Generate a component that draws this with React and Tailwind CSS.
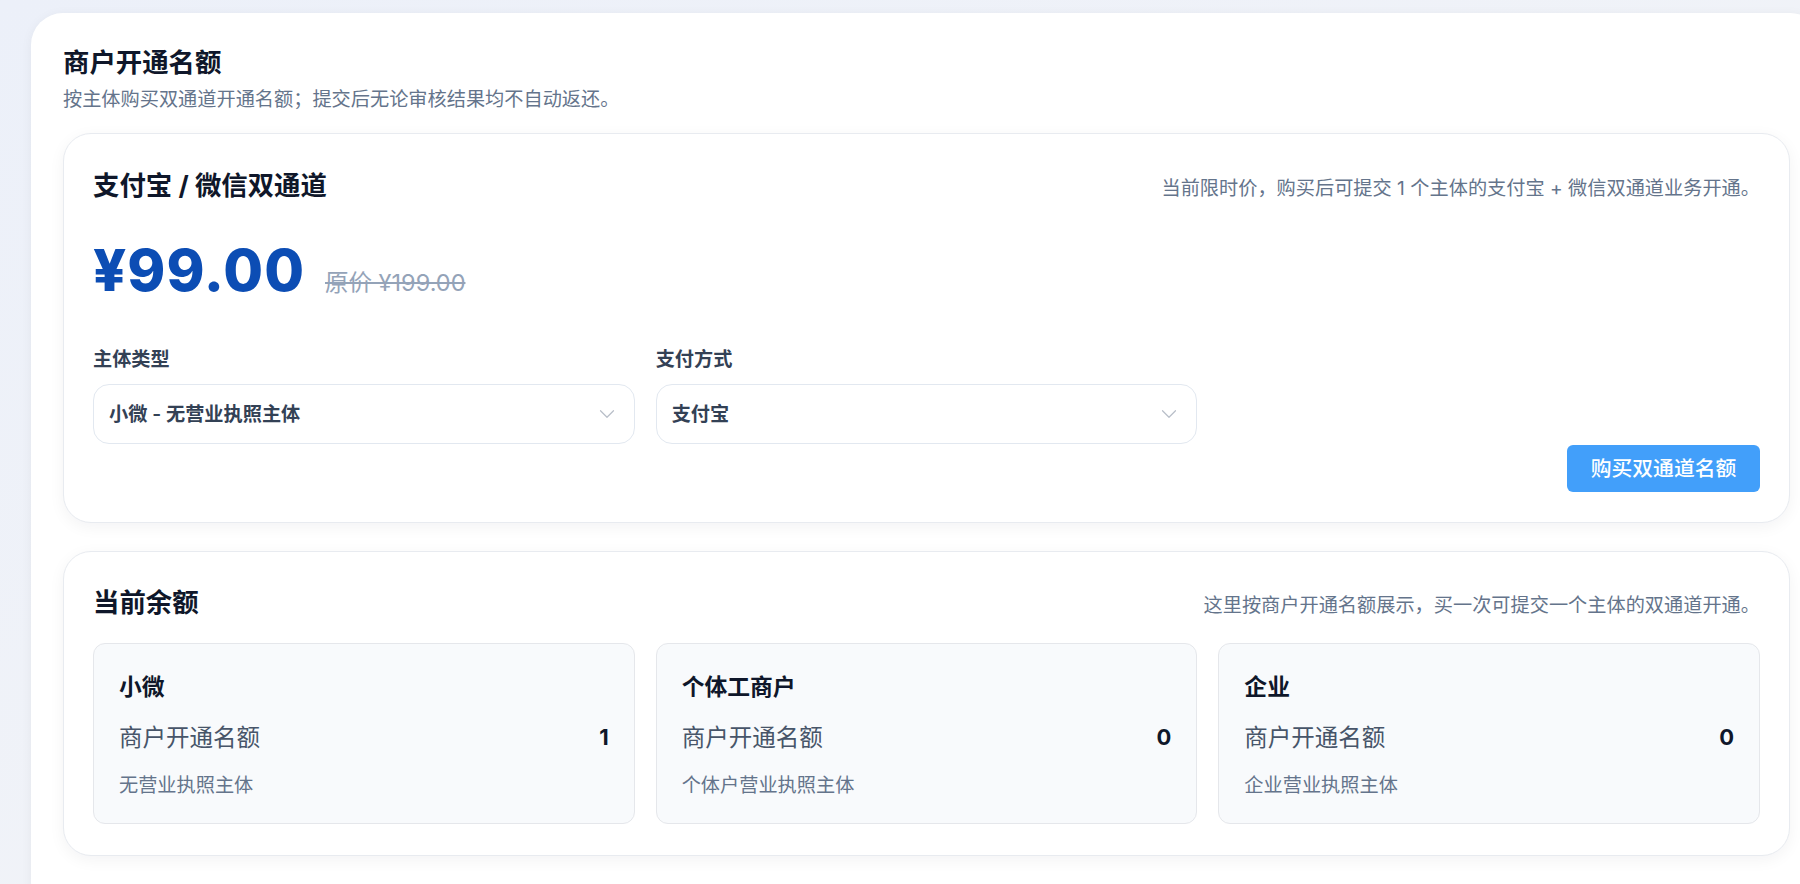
import React from "react";
import { ChevronDown } from "lucide-react";

const font = { fontFamily: 'Inter, "Noto Sans CJK SC", sans-serif' };

const balances = [
  { name: "小微", count: 1, desc: "无营业执照主体" },
  { name: "个体工商户", count: 0, desc: "个体户营业执照主体" },
  { name: "企业", count: 0, desc: "企业营业执照主体" },
];

const SelectBox = ({ label, value }) => (
  <div>
    <div className="text-[19.2px] leading-[29px] font-semibold text-[#334155]">{label}</div>
    <div className="mt-[10px] h-[60px] rounded-[16px] border border-[#e2e8f0] bg-white pl-[15px] pr-[14px] flex items-center justify-between">
      <span className="text-[19.2px] font-semibold text-[#334155]">{value}</span>
      <ChevronDown size={26} strokeWidth={1.1} className="text-[#b8bec8]" />
    </div>
  </div>
);

export default function App() {
  return (
    <div
      style={font}
      className="h-[884px] w-full overflow-hidden bg-gradient-to-br from-[#ecf0f9] to-[#f4f5f7] pl-[31px] pt-[13px]"
    >
      <div className="w-[1791px] min-h-[900px] rounded-[32px] bg-white shadow-[0_2px_12px_rgba(15,23,42,0.05)] px-[32px] pt-[31px]">
        {/* page header */}
        <h1 className="text-[26.4px] leading-[37px] font-semibold text-[#0f172a]">商户开通名额</h1>
        <p className="mt-[4px] text-[19.2px] leading-[29px] text-[#64748b]">
          按主体购买双通道开通名额；提交后无论审核结果均不自动返还。
        </p>

        {/* purchase card */}
        <div className="mt-[19px] rounded-[28px] border border-[#e8ebf0] bg-white shadow-[0_4px_16px_rgba(15,23,42,0.05)] px-[29px] pt-[33px] pb-[30px]">
          <div className="flex items-baseline justify-between">
            <h2 className="text-[26.4px] leading-[37px] font-bold text-[#0f172a]">支付宝 / 微信双通道</h2>
            <p className="text-[19.2px] text-[#64748b]">
              当前限时价，购买后可提交 1 个主体的支付宝 + 微信双通道业务开通。
            </p>
          </div>

          <div className="mt-[38px] flex items-baseline">
            <span className="text-[57.6px] leading-none font-extrabold tracking-[1px] text-[#0c4db4]">¥99.00</span>
            <span className="ml-[20px] text-[23.5px] text-[#94a3b8] line-through">原价 ¥199.00</span>
          </div>

          <div className="mt-[45px] grid grid-cols-3 gap-x-[21px]">
            <SelectBox label="主体类型" value="小微 - 无营业执照主体" />
            <SelectBox label="支付方式" value="支付宝" />
          </div>

          <div className="mt-[1px] flex justify-end">
            <button className="h-[47px] w-[193px] rounded-[6px] bg-[#429ffa] text-[20.8px] font-medium text-white">
              购买双通道名额
            </button>
          </div>
        </div>

        {/* balance card */}
        <div className="mt-[28px] rounded-[28px] border border-[#e8ebf0] bg-white shadow-[0_4px_16px_rgba(15,23,42,0.05)] px-[29px] pt-[32px] pb-[31px]">
          <div className="flex items-baseline justify-between">
            <h2 className="text-[26.4px] leading-[37px] font-bold text-[#0f172a]">当前余额</h2>
            <p className="text-[19.2px] text-[#64748b]">这里按商户开通名额展示，买一次可提交一个主体的双通道开通。</p>
          </div>

          <div className="mt-[22px] grid grid-cols-3 gap-x-[21px]">
            {balances.map((b) => (
              <div key={b.name} className="rounded-[12px] border border-[#e5e7eb] bg-[#f8fafc] px-[25px] pt-[27px] pb-[24px]">
                <div className="text-[22.8px] leading-[32px] font-bold text-[#0f172a]">{b.name}</div>
                <div className="mt-[18px] flex items-center justify-between">
                  <span className="text-[23.5px] leading-[33px] text-[#475569]">商户开通名额</span>
                  <span className="text-[22px] font-bold text-[#0f172a]">{b.count}</span>
                </div>
                <div className="mt-[18px] text-[19.2px] leading-[27px] text-[#64748b]">{b.desc}</div>
              </div>
            ))}
          </div>
        </div>
      </div>
    </div>
  );
}
